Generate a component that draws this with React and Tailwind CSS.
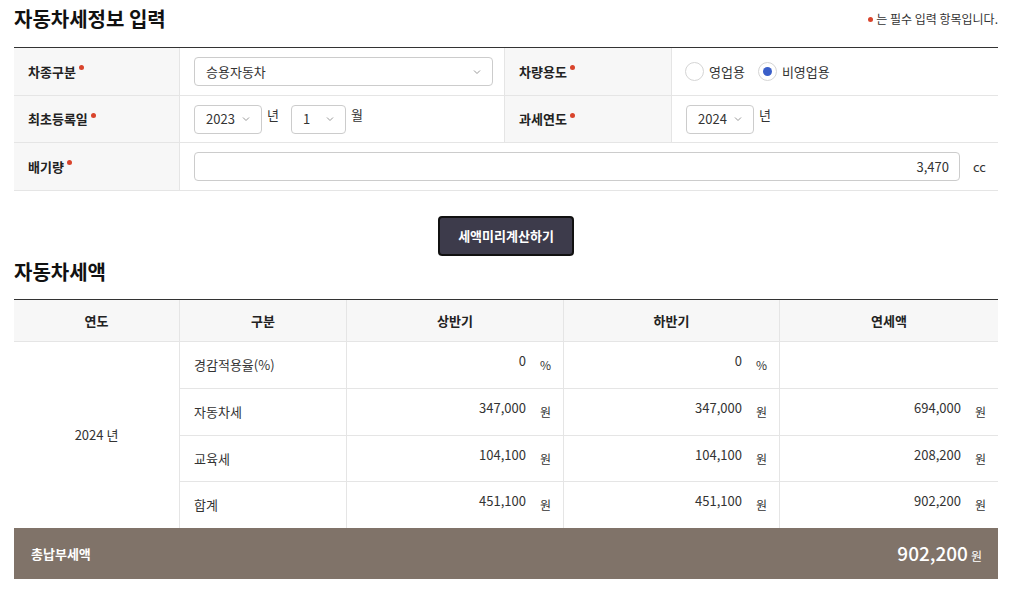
import React from "react";

const Req = () => <span className="ml-[3px] inline-block h-[5px] w-[5px] -translate-y-[4px] rounded-full bg-[#d9442c]" />;

const Chevron = ({ size = 10 }) => (
  <svg width={size} height={size} viewBox="0 0 10 10" className="text-[#999]">
    <path d="M2 3.5 L5 6.5 L8 3.5" fill="none" stroke="currentColor" strokeWidth="1" />
  </svg>
);

const Select = ({ value, w }) => (
  <div className={`flex h-[29px] ${w} items-center justify-between rounded-[4px] border border-[#ccc] bg-white pl-[11px] pr-[10px] text-[13px] text-[#333]`}>
    <span>{value}</span>
    <Chevron />
  </div>
);

const Label = ({ children }) => (
  <div className="flex items-center border-r border-[#e5e5e5] bg-[#f7f7f7] pl-[14px] text-[13px] font-bold text-[#222]">
    {children}
    <Req />
  </div>
);

const Radio = ({ checked, label }) => (
  <label className="flex items-center gap-[5px] text-[13px] text-[#333]">
    <span className="flex h-[19px] w-[19px] items-center justify-center rounded-full border border-[#d5d5d5] bg-white">
      {checked && <span className="h-[9px] w-[9px] rounded-full bg-[#3b5fc9]" />}
    </span>
    {label}
  </label>
);

const Amount = ({ v, unit = "원", last }) => (
  <div className={`flex h-full items-center justify-end pr-[13px] text-[13px] text-[#333] ${last ? "" : "border-r border-[#e5e5e5]"}`}>
    <span className="-translate-y-[4px]">{v}</span>
    <span className="ml-[14px] w-[10px] text-center text-[12px]">{unit}</span>
  </div>
);

const rows = [
  { name: "경감적용율(%)", a: "0", b: "0", c: null, unit: "%", h: "h-[47px]" },
  { name: "자동차세", a: "347,000", b: "347,000", c: "694,000", unit: "원", h: "h-[47px]" },
  { name: "교육세", a: "104,100", b: "104,100", c: "208,200", unit: "원", h: "h-[46px]" },
  { name: "합계", a: "451,100", b: "451,100", c: "902,200", unit: "원", h: "h-[46px]" },
];

export default function App() {
  return (
    <div className="min-h-[602px] bg-white pl-[14px] pr-[23px] pt-[5px] text-[#333]" style={{ fontFamily: '"Noto Sans CJK KR", "Noto Sans", sans-serif' }}>
      {/* 입력 */}
      <div className="flex items-center justify-between">
        <h1 className="text-[20px] font-bold leading-[28px] text-[#111]">자동차세정보 입력</h1>
        <p className="flex items-center text-[12px] text-[#333]">
          <span className="mr-[3px] inline-block h-[5px] w-[5px] rounded-full bg-[#d9442c]" />
          는 필수 입력 항목입니다.
        </p>
      </div>

      <div className="mt-[14px] border-t border-[#333]">
        <div className="grid h-[48px] grid-cols-[166px_325px_167px_1fr] border-b border-[#e5e5e5]">
          <Label>차종구분</Label>
          <div className="flex items-center border-r border-[#e5e5e5] pl-[14px]">
            <Select value="승용자동차" w="w-[299px]" />
          </div>
          <Label>차량용도</Label>
          <div className="flex items-center gap-[13px] pl-[13px]">
            <Radio label="영업용" />
            <Radio checked label="비영업용" />
          </div>
        </div>
        <div className="grid h-[47px] grid-cols-[166px_325px_167px_1fr] border-b border-[#e5e5e5]">
          <Label>최초등록일</Label>
          <div className="flex items-center border-r border-[#e5e5e5] pl-[14px] text-[13px]">
            <Select value="2023" w="w-[68px]" />
            <span className="ml-[5px] mr-[12px] -translate-y-[4px]">년</span>
            <Select value="1" w="w-[55px]" />
            <span className="ml-[5px] -translate-y-[4px]">월</span>
          </div>
          <Label>과세연도</Label>
          <div className="flex items-center pl-[14px] text-[13px]">
            <Select value="2024" w="w-[68px]" />
            <span className="ml-[5px] -translate-y-[4px]">년</span>
          </div>
        </div>
        <div className="grid h-[48px] grid-cols-[166px_1fr] border-b border-[#e5e5e5]">
          <Label>배기량</Label>
          <div className="flex items-center pl-[14px] text-[13px]">
            <div className="flex h-[29px] w-[766px] items-center justify-end rounded-[4px] border border-[#ccc] px-[10px]">3,470</div>
            <span className="ml-[13px]">cc</span>
          </div>
        </div>
      </div>

      <div className="mt-[25px] flex justify-center">
        <button className="h-[40px] w-[136px] rounded-[4px] border-2 border-[#111] bg-[#3d3b4b] text-[13px] font-bold text-white">세액미리계산하기</button>
      </div>

      {/* 세액 */}
      <h2 className="mt-[2px] text-[20px] font-bold leading-[28px] text-[#111]">자동차세액</h2>

      <div className="mt-[13px] border-t border-[#333]">
        <div className="grid h-[42px] grid-cols-[166px_167px_217px_216px_1fr] border-b border-[#e5e5e5] bg-[#f7f7f7] text-[13px] font-bold text-[#222]">
          {["연도", "구분", "상반기", "하반기", "연세액"].map((h, i) => (
            <div key={h} className={`flex items-center justify-center ${i < 4 ? "border-r border-[#e5e5e5]" : ""}`}>{h}</div>
          ))}
        </div>
        <div className="grid grid-cols-[166px_1fr]">
          <div className="flex items-center justify-center border-r border-[#e5e5e5] text-[13px]">2024 년</div>
          <div>
            {rows.map((r, i) => (
              <div key={r.name} className={`grid ${r.h} grid-cols-[167px_217px_216px_1fr] ${i < 3 ? "border-b border-[#e5e5e5]" : ""}`}>
                <div className="flex items-center border-r border-[#e5e5e5] pl-[14px] text-[13px]">{r.name}</div>
                <Amount v={r.a} unit={r.unit} />
                <Amount v={r.b} unit={r.unit} />
                {r.c ? <Amount v={r.c} unit={r.unit} last /> : <div />}
              </div>
            ))}
          </div>
        </div>
        <div className="flex h-[51px] items-center justify-between bg-[#807369] pl-[17px] pr-[16px] text-white">
          <span className="text-[13px] font-bold">총납부세액</span>
          <span className="flex items-baseline">
            <span className="text-[19px] font-medium">902,200</span>
            <span className="ml-[3px] text-[12px]">원</span>
          </span>
        </div>
      </div>
    </div>
  );
}
